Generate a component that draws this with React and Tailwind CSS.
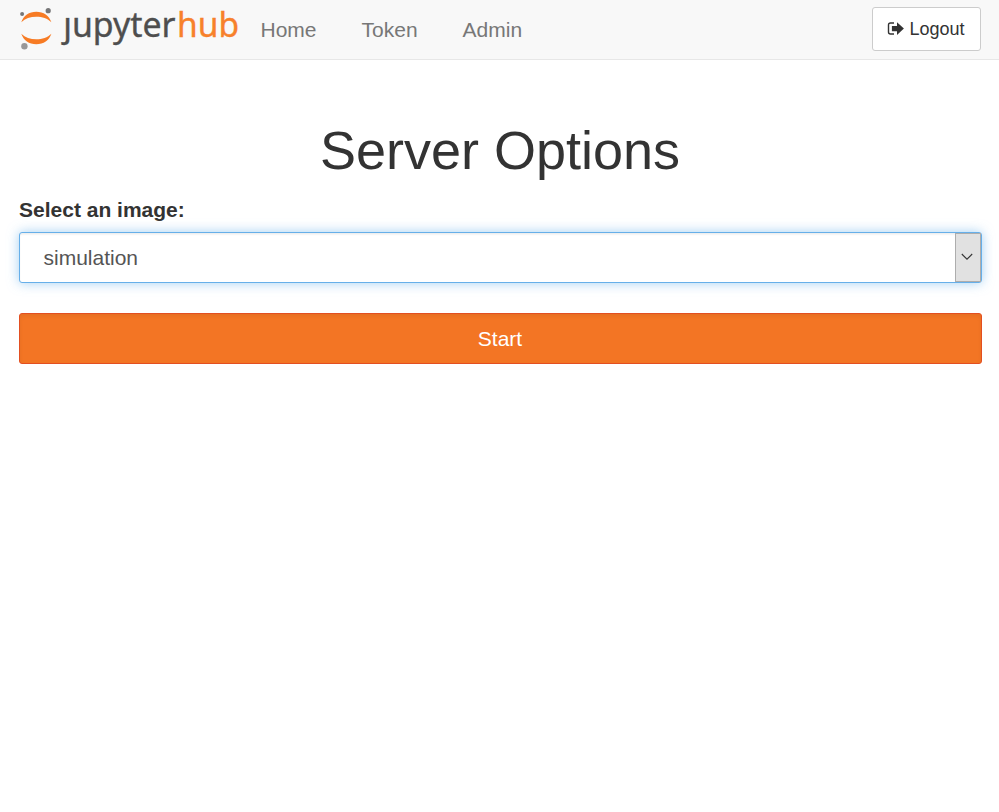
import React from "react";

function Logo() {
  return (
    <svg width="224" height="59" viewBox="18 0 224 59" className="block" role="img" aria-label="jupyterhub">
      <defs>
        <clipPath id="dotless">
          <rect x="50" y="17.5" width="22.5" height="36" />
          <rect x="72.5" y="0" width="170" height="59" />
        </clipPath>
      </defs>
      <path d="M21.3 22.3C23.5 15.6 29 11.7 36.3 11.7S49.2 15.6 51.4 22.3C47.5 18.4 42.3 16.8 36.3 16.8S25.2 18.4 21.3 22.3Z" fill="#f77b24" />
      <path d="M21.3 33.7C23.5 40.4 29 44.2 36.3 44.2S49.2 40.4 51.4 33.7C47.5 37.6 42.3 39.2 36.3 39.2S25.2 37.6 21.3 33.7Z" fill="#f77b24" />
      <circle cx="22.1" cy="14" r="2" fill="#767677" />
      <circle cx="48.2" cy="10.7" r="2.6" fill="#767677" />
      <circle cx="24.4" cy="46.3" r="3.2" fill="#989798" />
      <g fontFamily="'Noto Sans', sans-serif" fontSize="34" strokeWidth=".35">
        <text x="63.2" y="36.8" fill="#4e4e4e" stroke="#4e4e4e" textLength="112.3" lengthAdjust="spacingAndGlyphs" clipPath="url(#dotless)">jupyter</text>
        <text x="177" y="36.8" fill="#f7812b" stroke="#f7812b" textLength="62" lengthAdjust="spacingAndGlyphs">hub</text>
      </g>
    </svg>
  );
}

function LogoutIcon() {
  return (
    <svg width="17" height="14" viewBox="0 0 17 14" className="block">
      <path d="M7 1H3.5Q1.5 1 1.5 3V10Q1.5 12 3.5 12H7" fill="none" stroke="#333" strokeWidth="1.4" />
      <path d="M4.9 4H10V.2L16.9 6.5L10 12.9V9.2H4.9Z" fill="#333" />
    </svg>
  );
}

export default function App() {
  return (
    <div className="h-[812px] w-[999px] overflow-hidden bg-white font-['Liberation_Sans',Arial,sans-serif] text-[21px] leading-[30px] text-[#333]">
      <header className="flex h-[60px] items-center border-b border-[#e7e7e7] bg-[#f8f8f8] px-[18px]">
        <Logo />
        <nav className="ml-[18.5px] flex gap-[45px] text-[#777]">
          <a>Home</a>
          <a>Token</a>
          <a>Admin</a>
        </nav>
        <button className="mb-[2px] ml-auto flex h-[44px] w-[109px] items-center justify-center gap-[5px] rounded-[3px] border border-[#ccc] bg-white pr-px text-[18px]">
          <LogoutIcon />
          <span>Logout</span>
        </button>
      </header>
      <main className="pr-[17px] pl-[19px]">
        <h1 className="pt-[60px] pr-px text-center text-[54px] leading-[60px]">Server Options</h1>
        <label className="mt-[15px] block font-bold">Select an image:</label>
        <div className="mt-[7px] flex h-[51px] items-stretch justify-between rounded-[3px] border border-[#66afe9] bg-white shadow-[inset_0_1.5px_1.5px_rgba(0,0,0,.075),0_0_12px_rgba(102,175,233,.6)]">
          <span className="self-center pl-[23.5px] text-[#555]">simulation</span>
          <span className="flex w-[26px] items-center justify-center border border-[#adadad] bg-[#e1e1e1] pr-[2px] pb-[2px]">
            <svg width="12" height="8" viewBox="0 0 12 8">
              <path d="M.8 1L6 6.2L11.2 1" fill="none" stroke="#333" strokeWidth="1.1" />
            </svg>
          </span>
        </div>
        <button className="mt-[30px] block h-[51px] w-full rounded-[3px] border border-[#e34f21] bg-[#f37524] pr-px text-white shadow-[inset_0_2px_4px_rgba(0,0,0,.06)]">
          Start
        </button>
      </main>
    </div>
  );
}
